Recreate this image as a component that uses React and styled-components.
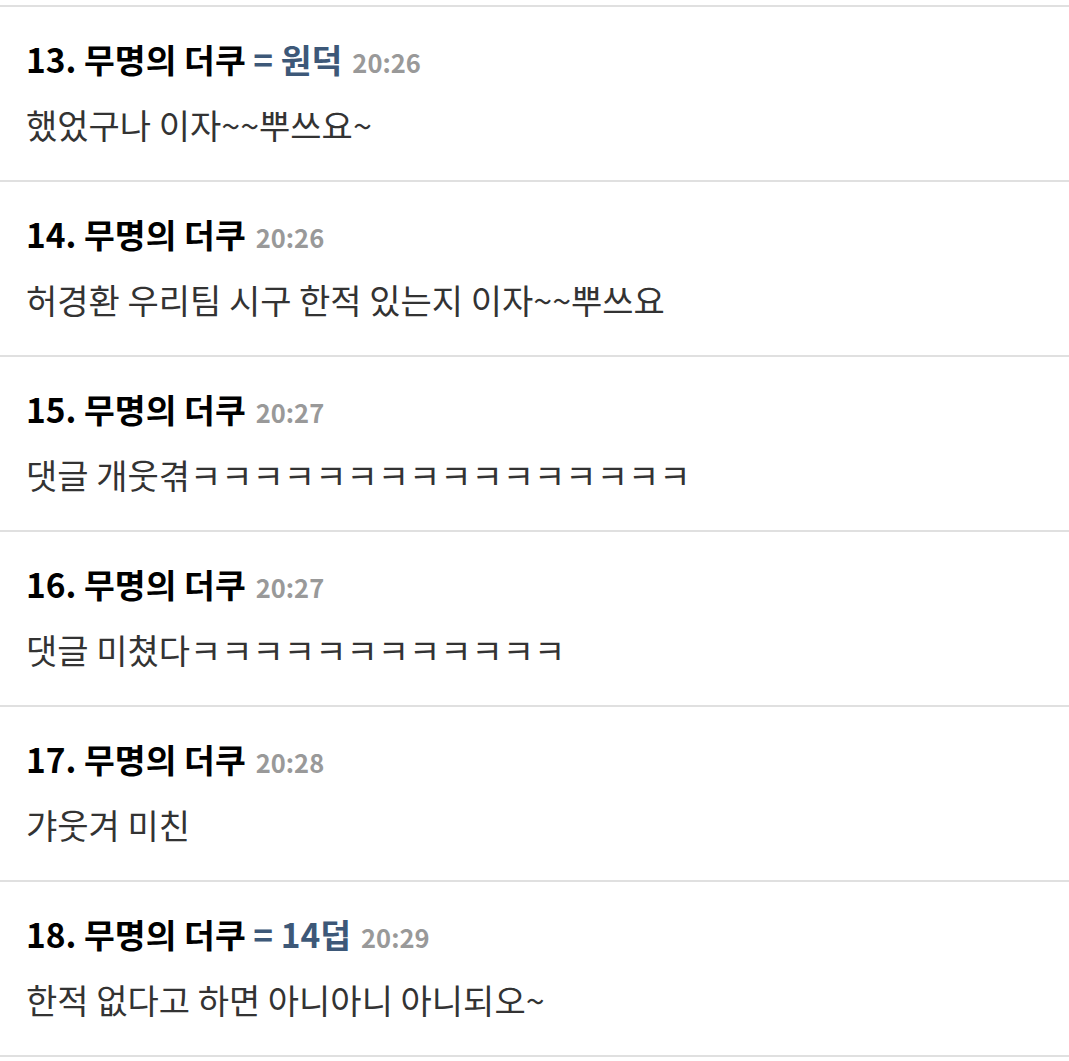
import React from 'react';
import styled, { createGlobalStyle } from 'styled-components';

const GlobalStyle = createGlobalStyle`
    body {
        margin: 0;
        background: #fff;
        font-family: "Noto Sans CJK KR", "Noto Sans", sans-serif;
    }
`;

const CommentList = styled.ul`
    list-style: none;
    margin: 5px 0 0;
    padding: 0;
    border-top: 2px solid #e0e0e0;
`;

const CommentItem = styled.li`
    padding: 30px 26px 33px;
    border-bottom: 2px solid #e0e0e0;
`;

const Header = styled.div`
    font-size: 33.5px;
    line-height: 44px;
    font-weight: 700;
    color: #000;
    white-space: nowrap;
`;

const Tag = styled.span`
    color: #3d5878;
`;

const Time = styled.span`
    color: #999;
    font-size: 25.5px;
    margin-left: 10px;
`;

const Body = styled.p`
    margin: 19px 0 0;
    font-size: 34px;
    line-height: 44px;
    color: #333;
`;

const comments = [
    { no: 13, tag: '원덕', time: '20:26', text: '했었구나 이자~~뿌쓰요~' },
    { no: 14, time: '20:26', text: '허경환 우리팀 시구 한적 있는지 이자~~뿌쓰요' },
    { no: 15, time: '20:27', text: '댓글 개웃겪ㅋㅋㅋㅋㅋㅋㅋㅋㅋㅋㅋㅋㅋㅋㅋㅋ' },
    { no: 16, time: '20:27', text: '댓글 미쳤다ㅋㅋㅋㅋㅋㅋㅋㅋㅋㅋㅋㅋ' },
    { no: 17, time: '20:28', text: '갸웃겨 미친' },
    { no: 18, tag: '14덥', time: '20:29', text: '한적 없다고 하면 아니아니 아니되오~' },
];

function App() {
    return (
        <>
            <GlobalStyle />
            <CommentList>
                {comments.map(item => (
                    <CommentItem key={item.no}>
                        <Header>
                            {item.no}. 무명의 더쿠
                            {item.tag && <Tag> = {item.tag}</Tag>}
                            <Time>{item.time}</Time>
                        </Header>
                        <Body>{item.text}</Body>
                    </CommentItem>
                ))}
            </CommentList>
        </>
    );
}

export default App;
